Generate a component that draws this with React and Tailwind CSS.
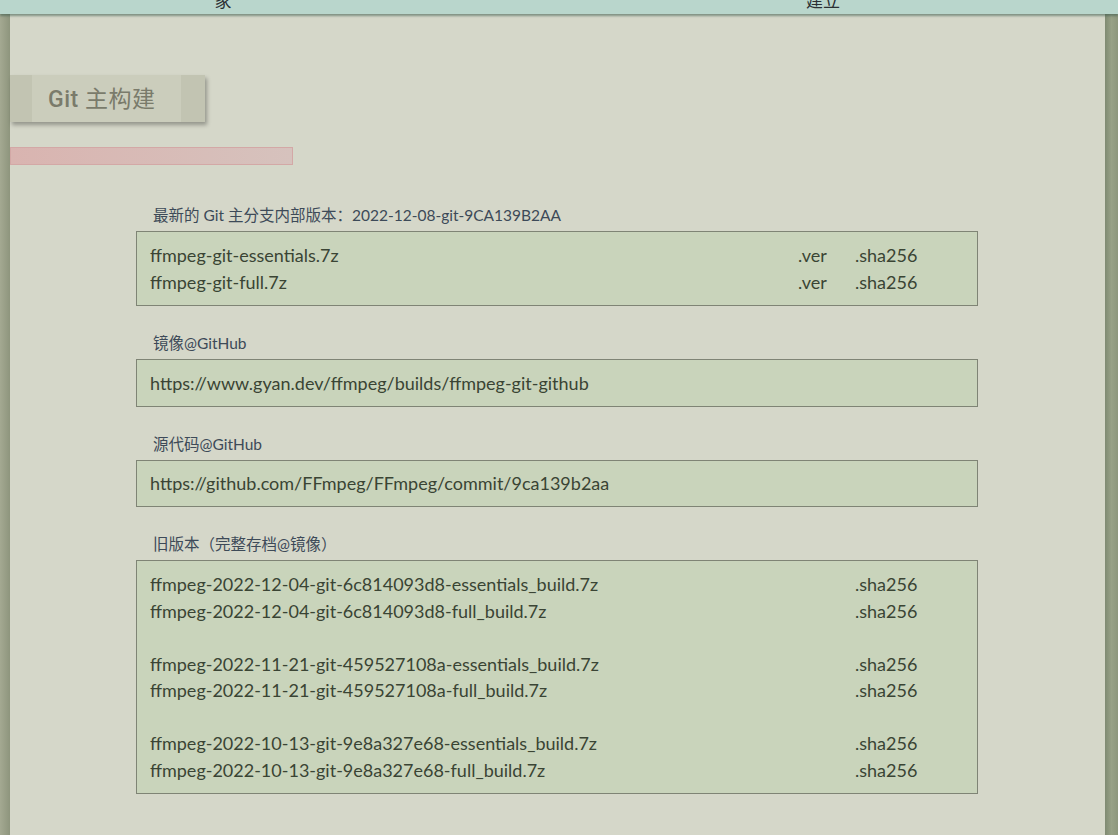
import React from 'react';

const latest = [
  { name: 'ffmpeg-git-essentials.7z', ver: true },
  { name: 'ffmpeg-git-full.7z', ver: true },
];

const older = [
  'ffmpeg-2022-12-04-git-6c814093d8-essentials_build.7z',
  'ffmpeg-2022-12-04-git-6c814093d8-full_build.7z',
  null,
  'ffmpeg-2022-11-21-git-459527108a-essentials_build.7z',
  'ffmpeg-2022-11-21-git-459527108a-full_build.7z',
  null,
  'ffmpeg-2022-10-13-git-9e8a327e68-essentials_build.7z',
  'ffmpeg-2022-10-13-git-9e8a327e68-full_build.7z',
];

const Label = ({ children, first }) => (
  <div className={`${first ? '' : 'mt-[27px]'} mb-[6px] pl-[17px] text-[15.5px] leading-[20px] text-[#3d4a58]`}>
    {children}
  </div>
);

const Box = ({ children, single }) => (
  <div className={`border border-[#7f8475] bg-[#c9d4bb] px-[13px] ${single ? 'py-[9.5px]' : 'py-[10px]'} text-[18px] leading-[26.5px] text-[#3a4434]`}>
    {children}
  </div>
);

const Row = ({ name, ver, sha = true }) => (
  <div className="flex">
    <span className="flex-1">{name}</span>
    <span className="w-[57px]">{ver ? '.ver' : ''}</span>
    <span className="w-[109px]">{sha ? '.sha256' : ''}</span>
  </div>
);

export default function App() {
  return (
    <div
      className="relative h-[835px] w-full overflow-hidden bg-[#d5d7c9]"
      style={{ fontFamily: 'Lato, "Noto Sans CJK SC", sans-serif' }}
    >
      <nav className="relative z-10 flex h-[14px] overflow-hidden bg-[#b9d6cc] shadow-[0_2px_2px_rgba(60,90,75,0.55)]">
        <div className="w-[446px] shrink-0 text-center text-[17px] leading-[17px] text-[#2a2f33] -translate-y-[8px]">家</div>
        <div className="w-[754px] shrink-0 text-center text-[17px] leading-[17px] text-[#2a2f33] -translate-y-[8px]">建立</div>
      </nav>

      <div className="flex h-[821px]">
        <div className="w-[10px] bg-gradient-to-r from-[#a4a992] to-[#8e957d]" />

        <main className="flex-1">
          <div className="mt-[61px] flex h-[47px] w-[195px] bg-[#c2c4b2] shadow-[2px_3px_4px_rgba(0,0,0,0.3)]">
            <div className="ml-[22px] flex w-[149px] items-center bg-[#cbcdbc] pl-[16px] pt-[4px] text-[23px] text-[#7a7b6b]">
              <span
                style={{ fontFamily: 'Roboto, "Noto Sans CJK SC", sans-serif' }}
                className="whitespace-nowrap tracking-[0.5px]"
              >
                <span className="font-medium">Git</span> 主构建
              </span>
            </div>
          </div>

          <div className="mt-[25px] h-[18px] w-[283px] border border-[#d3a8a6] bg-gradient-to-r from-[#d9b4b0] to-[#d6c2bd]" />

          <section className="ml-[126px] mt-[40px] w-[842px]">
            <Label first>最新的 Git 主分支内部版本：2022-12-08-git-9CA139B2AA</Label>
            <Box>
              {latest.map((f) => (
                <Row key={f.name} name={f.name} ver={f.ver} />
              ))}
            </Box>

            <Label>镜像@GitHub</Label>
            <Box single>https://www.gyan.dev/ffmpeg/builds/ffmpeg-git-github</Box>

            <Label>源代码@GitHub</Label>
            <Box single>https://github.com/FFmpeg/FFmpeg/commit/9ca139b2aa</Box>

            <Label>旧版本（完整存档@镜像）</Label>
            <Box>
              {older.map((name, i) =>
                name ? <Row key={i} name={name} /> : <div key={i} className="h-[26.5px]" />
              )}
            </Box>
          </section>
        </main>

        <div className="w-[13px] bg-gradient-to-r from-[#7f8a72] via-[#98a287] to-[#8d977d]" />
      </div>
    </div>
  );
}
